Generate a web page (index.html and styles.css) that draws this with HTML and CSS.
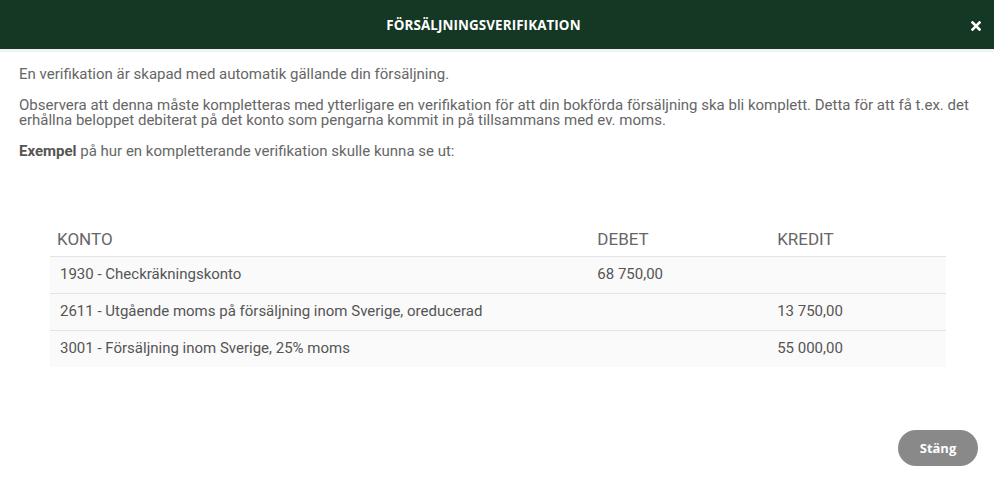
FILE: index.html
```
<!DOCTYPE html>
<html lang="sv">
<head>
<meta charset="utf-8">
<title>Försäljningsverifikation</title>
<link rel="stylesheet" href="styles.css">
</head>
<body>
<div class="modal">
  <header class="modal-header">
    <h1 class="modal-title">FÖRSÄLJNINGSVERIFIKATION</h1>
    <button class="close" aria-label="Stäng">
      <svg width="10" height="10" viewBox="0 0 10 10"><path d="M1.5 1.5 L8.5 8.5 M8.5 1.5 L1.5 8.5" stroke="#fff" stroke-width="2.6" stroke-linecap="square"/></svg>
    </button>
  </header>
  <div class="modal-body">
    <p>En verifikation är skapad med automatik gällande din försäljning.</p>
    <p>Observera att denna måste kompletteras med ytterligare en verifikation för att din bokförda försäljning ska bli komplett. Detta för att få t.ex. det erhållna beloppet debiterat på det konto som pengarna kommit in på tillsammans med ev. moms.</p>
    <p><strong>Exempel</strong> på hur en kompletterande verifikation skulle kunna se ut:</p>
    <table class="ver-table">
      <thead>
        <tr><th class="col-konto">KONTO</th><th class="col-num">DEBET</th><th class="col-num">KREDIT</th></tr>
      </thead>
      <tbody>
        <tr><td>1930 - Checkräkningskonto</td><td>68 750,00</td><td></td></tr>
        <tr><td>2611 - Utgående moms på försäljning inom Sverige, oreducerad</td><td></td><td>13 750,00</td></tr>
        <tr><td>3001 - Försäljning inom Sverige, 25% moms</td><td></td><td>55 000,00</td></tr>
      </tbody>
    </table>
  </div>
  <footer class="modal-footer">
    <button class="btn-close">Stäng</button>
  </footer>
</div>
</body>
</html>
```
FILE: styles.css
```
html, body {
  margin: 0;
  padding: 0;
  background: #fff;
}
body {
  font-family: Roboto, "Noto Sans", sans-serif;
  color: #666;
  width: 994px;
  height: 489px;
  overflow: hidden;
}
.modal {
  display: flex;
  flex-direction: column;
  height: 489px;
}
.modal-header {
  height: 49px;
  background: #143823;
  border-bottom: 3px solid #eef3f6;
  display: flex;
  align-items: center;
  padding: 0 12px 0 0;
}
.modal-title {
  flex: 1;
  margin: 0;
  text-align: center;
  padding-left: 12px;
  padding-right: 15px;
  font-family: "Open Sans", sans-serif;
  font-weight: 700;
  font-size: 13.4px;
  letter-spacing: 0.1px;
  color: #fff;
  line-height: 16px;
}
.close {
  background: none;
  border: 0;
  padding: 0;
  width: 12px;
  height: 12px;
  display: flex;
  align-items: center;
  justify-content: center;
  margin-top: 2px;
}
.modal-body {
  flex: 1;
  padding: 15px 19px 0 19px;
}
.modal-body p {
  margin: 0 0 16px 0;
  font-size: 15px;
  line-height: 15px;
}
.modal-body strong {
  font-weight: 700;
  color: #555;
}
.ver-table {
  margin: 64px 0 0 31px;
  width: 896px;
  border-collapse: collapse;
}
.ver-table th {
  text-align: left;
  font-weight: 400;
  font-size: 17px;
  color: #666;
  padding: 7px 10px 7px 11px;
  line-height: 19px;
  border-bottom: 1px solid #e4e4e4;
}
.ver-table th.col-konto {
  padding-left: 7px;
  width: 520px;
}
.ver-table th.col-num {
  width: 159px;
}
.ver-table td {
  background: #fafafa;
  font-size: 15px;
  color: #555;
  padding: 8px 10px 10px 11px;
  line-height: 18px;
  border-bottom: 1px solid #e4e4e4;
}
.ver-table td:first-child {
  padding-left: 10px;
}
.ver-table tbody tr:last-child td {
  border-bottom: 0;
}
.modal-footer {
  display: flex;
  justify-content: flex-end;
  padding: 0 16px 23px 0;
}
.btn-close {
  width: 80px;
  height: 36px;
  border: 0;
  border-radius: 18px;
  background: #898989;
  color: #fff;
  font-family: "Open Sans", sans-serif;
  font-weight: 700;
  font-size: 13px;
  padding: 0;
}
```
